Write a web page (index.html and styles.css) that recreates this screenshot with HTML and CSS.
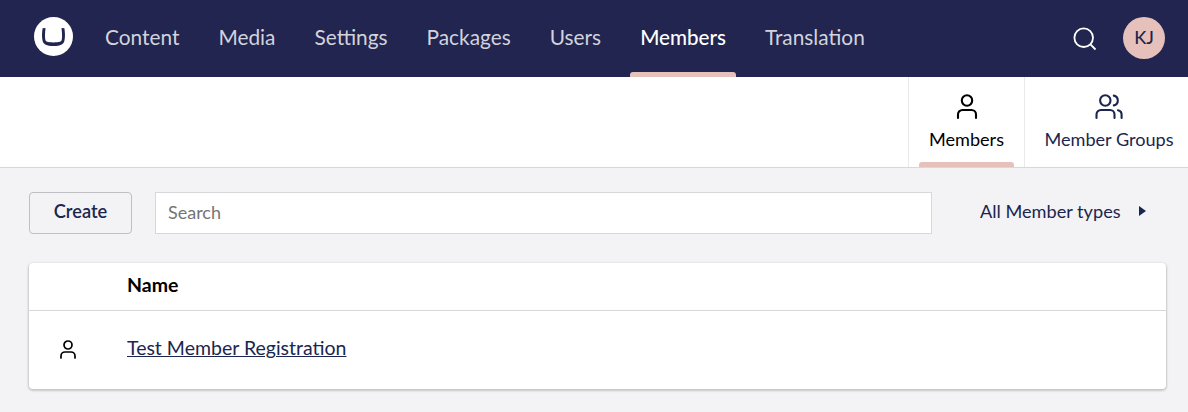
FILE: index.html
```html
<!DOCTYPE html>
<html lang="en">
<head>
<meta charset="utf-8">
<title>Members</title>
<link rel="stylesheet" href="styles.css">
</head>
<body>
<header class="topbar">
  <svg class="logo" viewBox="0 0 40 40" aria-hidden="true">
    <circle cx="20.5" cy="19.500" r="19.5" fill="#fff"/>
    <path d="M9.600 11.300C8.900 16 8.700 20.500 9.700 24.200c.8 3 3.800 4.800 10.800 4.800s10-1.800 10.800-4.800c1-3.700.8-8.200.1-12.900l-2.900-.4c.6 5 .9 9.500.2 12.200-.4 1.700-2 2.400-8.200 2.400s-7.700-.7-8.100-2.400c-.7-2.700-.4-7.200.1-12.200z" fill="#21254f"/>
  </svg>
  <nav class="sections">
    <a class="section">Content</a>
    <a class="section">Media</a>
    <a class="section">Settings</a>
    <a class="section">Packages</a>
    <a class="section">Users</a>
    <a class="section section-active">Members</a>
    <a class="section">Translation</a>
  </nav>
  <svg class="search-icon" viewBox="0 0 24 24" aria-hidden="true"><circle cx="10.700" cy="10.700" r="9.300"/><path d="M17.200 17.200l5.300 5.300"/></svg>
  <span class="avatar">KJ</span>
</header>
<div class="tabs">
  <a class="tab tab-active">
    <svg class="tab-icon" viewBox="0 0 28 28" aria-hidden="true"><circle cx="14" cy="7.500" r="5.200"/><path d="M5 25v-3.500a4.500 4.500 0 0 1 4.500-4.500h9a4.500 4.500 0 0 1 4.500 4.500V25"/></svg>
    <span>Members</span>
  </a>
  <a class="tab tab-groups">
    <svg class="tab-icon" viewBox="0 0 28 28" aria-hidden="true"><circle cx="10.300" cy="7.500" r="5.200"/><path d="M1.500 25v-3.500a4.500 4.500 0 0 1 4.500-4.500h9a4.500 4.500 0 0 1 4.500 4.500V25M18.800 2.600a5 5 0 0 1 0 9.800M23 17.200a4.500 4.500 0 0 1 3.600 4.500V25"/></svg>
    <span>Member Groups</span>
  </a>
</div>
<main class="content">
  <div class="toolbar">
    <button class="create">Create</button>
    <input class="search" type="text" placeholder="Search">
    <div class="filter"><span>All Member types</span><i class="caret"></i></div>
  </div>
  <div class="table">
    <div class="row row-head"><span></span><span>Name</span></div>
    <div class="row row-item">
      <svg class="row-icon" viewBox="0 0 22 22" aria-hidden="true"><circle cx="11" cy="6" r="4"/><path d="M4 19v-2a4 4 0 0 1 4-4h6a4 4 0 0 1 4 4v2"/></svg>
      <span><a class="member">Test Member Registration</a></span>
    </div>
  </div>
</main>
</body>
</html>
```
FILE: styles.css
```css
* { box-sizing: border-box; }
body {
  margin: 0;
  height: 412px;
  overflow: hidden;
  background: #f3f3f5;
  font: 20px/25px Lato, sans-serif;
  color: #1b264f;
}
.topbar {
  display: flex;
  align-items: center;
  height: 77px;
  padding: 0 23px 0 33px;
  background: #21254f;
}
.logo { width: 40px; height: 40px; margin-top: -3px; }
.sections { display: flex; height: 77px; margin-left: 22px; gap: 19px; }
.section {
  position: relative;
  padding: 0 10px;
  font-size: 20.85px;
  line-height: 74px;
  color: #d2d3dc;
}
.section-active { color: #fff; font-size: 20.6px; font-weight: 500; }
.section-active::after {
  content: "";
  position: absolute;
  left: 0;
  right: 0;
  bottom: 0;
  height: 5px;
  border-radius: 3px 3px 0 0;
  background: #e6c1bb;
}
.search-icon {
  width: 24px;
  height: 24px;
  margin: 1px 26px 0 auto;
  fill: none;
  stroke: #fff;
  stroke-width: 1.8;
}
.avatar {
  width: 42px;
  height: 42px;
  margin-top: -1px;
  border-radius: 50%;
  background: #e6c1bb;
  font-size: 18px;
  font-weight: 500;
  line-height: 41px;
  text-align: center;
}
.tabs {
  display: flex;
  justify-content: flex-end;
  height: 91px;
  background: #fff;
  border-bottom: 1px solid #d8d7d9;
}
.tab {
  position: relative;
  display: flex;
  flex-direction: column;
  align-items: center;
  width: 116px;
  padding-top: 16px;
  border-left: 1px solid #e9e9eb;
  font-size: 18.1px;
}
.tab-groups { width: 164px; padding-left: 5px; }
.tab-active { color: #000; }
.tab-active::after {
  content: "";
  position: absolute;
  left: 10px;
  right: 10px;
  bottom: 0;
  height: 5px;
  border-radius: 3px 3px 0 0;
  background: #e6c1bb;
}
.tab-icon {
  width: 28px;
  height: 28px;
  margin-bottom: 6px;
}
.tab-icon, .row-icon {
  fill: none;
  stroke: currentColor;
  stroke-width: 2.1;
  stroke-linecap: round;
}
.content { padding: 24px 22px 0 29px; }
.toolbar { display: flex; align-items: center; height: 42px; }
.create {
  width: 103px;
  height: 42px;
  padding: 0 0 4px;
  border: 1px solid #bfbfc3;
  border-radius: 4px;
  background: #f3f3f5;
  color: #1b264f;
  font: 600 18.2px Lato, sans-serif;
}
.search {
  width: 777px;
  height: 42px;
  margin-left: 23px;
  padding: 0 12px 2px;
  border: 1px solid #d8d7d9;
  background: #fff;
  font: 18px Lato, sans-serif;
}
.search::placeholder { color: #757575; }
.filter {
  display: flex;
  align-items: center;
  margin-left: 48px;
  padding-bottom: 3px;
  font-size: 18.15px;
}
.caret {
  margin: -2px 0 0 18px;
  border: 5px solid transparent;
  border-left: 7px solid #1b264f;
  border-right: 0;
}
.table {
  height: 126px;
  margin-top: 29px;
  border-radius: 4px;
  background: #fff;
  box-shadow: 0 1px 2px 1px rgba(0, 0, 0, .18);
}
.row {
  display: grid;
  grid-template-columns: 98px 1fr;
  align-items: center;
}
.row-head {
  height: 48px;
  padding-bottom: 4px;
  border-bottom: 1px solid #d8d7d9;
  color: #000;
  font-size: 19.5px;
  font-weight: 700;
}
.row-item { height: 78px; padding-bottom: 6px; font-size: 19.5px; }
.row-icon {
  width: 22px;
  height: 22px;
  margin: 5px 0 0 28px;
  color: #000;
  stroke-width: 1.7;
}
.member { text-decoration: underline; text-decoration-thickness: 1px; }
```
